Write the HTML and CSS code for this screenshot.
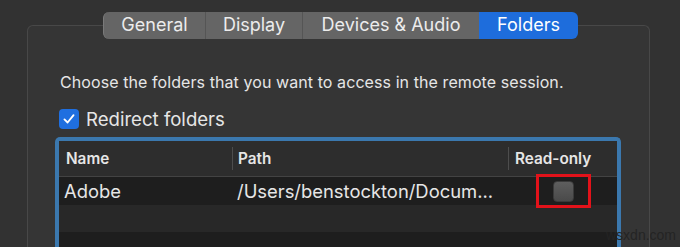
FILE: index.html
```html
<!DOCTYPE html>
<html lang="en">
<head>
    <meta charset="UTF-8">
    <title>Folders</title>
    <link rel="stylesheet" href="styles.css">
</head>
<body>
    <div class="window">
        <div class="tabs">
            <div class="tab">General</div>
            <div class="tab">Display</div>
            <div class="tab">Devices &amp; Audio</div>
            <div class="tab active">Folders</div>
        </div>

        <div class="panel">
            <p class="intro">Choose the folders that you want to access in the remote session.</p>

            <label class="redirect">
                <span class="check on">
                    <svg viewBox="0 0 20 20" width="14" height="14"><path d="M3.5 10.5 L8 15 L16.5 4.5" fill="none" stroke="#fff" stroke-width="2.6" stroke-linecap="round" stroke-linejoin="round"/></svg>
                </span>
                Redirect folders
            </label>

            <div class="table">
                <div class="row head">
                    <div class="cell name">Name</div>
                    <div class="cell path">Path</div>
                    <div class="cell ro">Read-only</div>
                </div>
                <div class="row dark">
                    <div class="cell name">Adobe</div>
                    <div class="cell path">/Users/benstockton/Docum...</div>
                    <div class="cell ro">
                        <span class="marker"><span class="check off"></span></span>
                    </div>
                </div>
                <div class="row light"></div>
                <div class="row dark"></div>
            </div>
        </div>
    </div>

    <div class="watermark">wsxdn.com</div>
</body>
</html>
```

FILE: styles.css
```css
body {
    margin: 0;
    background-color: #323232;
    font-family: Inter, "Liberation Sans", sans-serif;
    color: #e6e6e6;
    width: 680px;
    height: 247px;
    overflow: hidden;
}
.window {
    padding-top: 12px;
}
.tabs {
    display: flex;
    justify-content: center;
    position: relative;
    z-index: 1;
    margin-bottom: -14px;
    margin-left: 1px;
}
.tab {
    height: 27px;
    line-height: 26px;
    font-size: 18px;
    color: #ececec;
    background-color: #656565;
    border-right: 1px solid #555;
    box-sizing: border-box;
    text-align: center;
}
.tab:nth-child(1) { width: 103px; border-radius: 6px 0 0 6px; border-left: 1px solid #7a7a7a; }
.tab:nth-child(2) { width: 97px; }
.tab:nth-child(3) { width: 176px; border-right: none; }
.tab.active {
    width: 99px;
    background-color: #1e6ddc;
    color: #fff;
    border-radius: 0 6px 6px 0;
    border-right: none;
}
.panel {
    margin-left: 27px;
    width: 623px;
    height: 222px;
    box-sizing: border-box;
    border: 1px solid #484848;
    border-bottom: none;
    border-radius: 6px 6px 0 0;
    background-color: #353535;
    padding: 46px 0 0 27px;
}
.intro {
    margin: 0 0 0 5px;
    font-size: 16px;
    letter-spacing: 0.08px;
    line-height: 20px;
}
.redirect {
    display: flex;
    align-items: center;
    gap: 7px;
    margin: 16px 0 0 4px;
    font-size: 18.6px;
    height: 22px;
}
.check {
    width: 20px;
    height: 20px;
    border-radius: 4px;
    box-sizing: border-box;
    display: flex;
    align-items: center;
    justify-content: center;
}
.check.on {
    background-color: #1f6fe0;
}
.check.off {
    width: 21px;
    height: 21px;
    background: linear-gradient(#5e5e5e, #4a4a4a);
    border: 1px solid #3a3a3a;
}
.table {
    margin-top: 7px;
    width: 566px;
    height: 110px;
    box-sizing: border-box;
    border: 4px solid #3b78ae;
    border-bottom: none;
    border-radius: 5px 5px 0 0;
    background-color: #1f1f1f;
    overflow: hidden;
}
.row {
    display: flex;
    height: 28px;
    align-items: center;
}
.row.head {
    height: 35px;
    background-color: #2d2d2d;
    border-bottom: 1px solid #434343;
    font-weight: 600;
    font-size: 15.3px;
}
.row.dark {
    background-color: #1e1e1e;
    font-size: 18.4px;
}
.row.light {
    height: 27px;
    background-color: #282828;
}
.cell {
    box-sizing: border-box;
    height: 100%;
    display: flex;
    align-items: center;
}
.cell.name {
    width: 173px;
    padding-left: 7px;
}
.row.dark .cell.name { padding-left: 5px; }
.cell.path {
    width: 276px;
    padding-left: 6px;
}
.row.dark .cell.path { padding-left: 5px; }
.cell.ro {
    flex: 1;
    padding-left: 7px;
}
.row.head .cell.path,
.row.head .cell.ro {
    position: relative;
}
.row.head .cell.path::before,
.row.head .cell.ro::before {
    content: "";
    position: absolute;
    left: 0;
    top: 6px;
    bottom: 6px;
    width: 1px;
    background-color: #4d4d4d;
}
.row.dark .cell.ro {
    padding-left: 28px;
}
.marker {
    display: flex;
    align-items: center;
    justify-content: center;
    width: 55px;
    height: 34px;
    box-sizing: border-box;
    border: 3px solid #e2121a;
}
.watermark {
    position: absolute;
    left: 606px;
    top: 227px;
    font-size: 14px;
    color: #242424;
    font-family: "Liberation Sans", sans-serif;
}
```
